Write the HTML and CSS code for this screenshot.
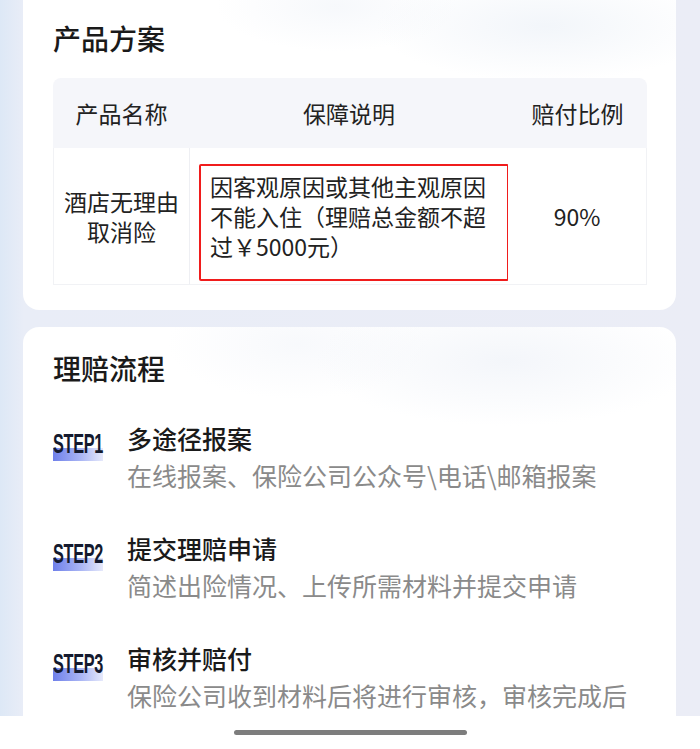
FILE: index.html
```html
<!DOCTYPE html>
<html lang="zh-CN">
<head>
<meta charset="utf-8">
<title>产品方案</title>
<link rel="stylesheet" href="styles.css">
</head>
<body>
<div class="page">
  <section class="card card-plan">
    <h2 class="card-title">产品方案</h2>
    <div class="table">
      <div class="cell head c1">产品名称</div>
      <div class="cell head c2">保障说明</div>
      <div class="cell head c3">赔付比例</div>
      <div class="cell body c1">酒店无理由取消险</div>
      <div class="cell body c2"><div class="highlight">因客观原因或其他主观原因不能入住（理赔总金额不超过￥5000元）</div></div>
      <div class="cell body c3">90%</div>
    </div>
  </section>

  <section class="card card-flow">
    <h2 class="card-title">理赔流程</h2>
    <div class="steps">
      <div class="step">
        <div class="badge"><span class="badge-text">STEP1</span></div>
        <div class="step-body">
          <div class="step-title">多途径报案</div>
          <div class="step-desc">在线报案、保险公司公众号\电话\邮箱报案</div>
        </div>
      </div>
      <div class="step">
        <div class="badge"><span class="badge-text">STEP2</span></div>
        <div class="step-body">
          <div class="step-title">提交理赔申请</div>
          <div class="step-desc">简述出险情况、上传所需材料并提交申请</div>
        </div>
      </div>
      <div class="step">
        <div class="badge"><span class="badge-text">STEP3</span></div>
        <div class="step-body">
          <div class="step-title">审核并赔付</div>
          <div class="step-desc">保险公司收到材料后将进行审核，审核完成后</div>
        </div>
      </div>
    </div>
  </section>
</div>
<div class="home-bar"><span class="indicator"></span></div>
</body>
</html>
```

FILE: styles.css
```css
html, body {
  margin: 0;
  padding: 0;
  height: 100%;
  overflow: hidden;
}

body {
  background: linear-gradient(90deg, #dde8f6 0px, #e9edf7 24px, #ebedf6 100%);
  font-family: "Noto Sans CJK SC", "Noto Sans", sans-serif;
  color: #1f1f1f;
}

.page {
  padding: 0 24px 0 23px;
}

.card {
  background-color: #ffffff;
  border-radius: 16px;
  padding: 0 30px;
}

.card-plan {
  margin-top: -20px;
  padding-top: 38px;
  padding-bottom: 25px;
  background-image:
    radial-gradient(ellipse 170px 55px at 80% 14%, rgba(232, 238, 246, 0.55), rgba(255, 255, 255, 0) 100%),
    radial-gradient(ellipse 120px 45px at 48% 8%, rgba(238, 242, 248, 0.5), rgba(255, 255, 255, 0) 100%);
}

.card-flow {
  margin-top: 17px;
  padding-top: 21px;
  padding-bottom: 40px;
  background-image:
    radial-gradient(ellipse 190px 65px at 74% 8%, rgba(236, 240, 247, 0.6), rgba(255, 255, 255, 0) 100%),
    radial-gradient(ellipse 130px 55px at 42% 4%, rgba(240, 243, 249, 0.5), rgba(255, 255, 255, 0) 100%);
}

.card-title {
  margin: 0;
  font-size: 28px;
  line-height: 40px;
  font-weight: 500;
  color: #1a1a1a;
}

/* table */
.table {
  margin-top: 20px;
  display: grid;
  grid-template-columns: 137px 318px 139px;
  grid-template-rows: 70px 137px;
}

.cell {
  display: flex;
  align-items: center;
  justify-content: center;
  text-align: center;
  font-size: 23px;
  line-height: 30px;
  color: #222222;
  box-sizing: border-box;
}

.cell.head {
  background-color: #f5f6fa;
}

.cell.head.c1 {
  border-top-left-radius: 8px;
}

.cell.head.c3 {
  border-top-right-radius: 8px;
}

.cell.body {
  background-color: #ffffff;
  border-bottom: 1px solid #f1f2f5;
}

.cell.body.c1 {
  padding: 0 10px;
  border-left: 1px solid #f1f2f5;
  border-right: 1px solid #eeeff3;
}

.cell.body.c3 {
  border-right: 1px solid #f1f2f5;
}

.cell.body.c2 {
  align-items: flex-start;
  justify-content: flex-start;
  padding: 16px 0 0 9px;
}

.highlight {
  flex-shrink: 0;
  width: 310px;
  height: 117px;
  box-sizing: border-box;
  border: 2px solid #f01c1c;
  border-radius: 2px;
  padding: 5px 8px 0 9px;
  text-align: left;
  font-size: 23px;
  line-height: 30px;
  color: #222222;
}

/* steps */
.steps {
  margin-top: 32px;
  display: flex;
  flex-direction: column;
  gap: 36px;
}

.step {
  display: flex;
  gap: 24px;
}

.badge {
  flex-shrink: 0;
  width: 50px;
  height: 30px;
  margin-top: 11px;
  background-image: linear-gradient(90deg, #6f80ea 0%, #a9b5f4 55%, #e6e9fb 100%);
  background-repeat: no-repeat;
  background-position: left bottom;
  background-size: 100% 13px;
  overflow: visible;
  white-space: nowrap;
}

.badge-text {
  display: inline-block;
  font-family: "Liberation Sans", "Noto Sans", sans-serif;
  font-weight: 700;
  font-size: 28px;
  line-height: 25px;
  letter-spacing: -0.5px;
  color: #141a2e;
  transform: scaleX(0.58);
  transform-origin: left center;
}

.step-body {
  display: flex;
  flex-direction: column;
}

.step-title {
  font-size: 25px;
  line-height: 37px;
  font-weight: 500;
  color: #1a1a1a;
}

.step-desc {
  font-size: 25px;
  line-height: 37px;
  color: #8a8a8a;
  white-space: nowrap;
}

/* system home indicator overlay */
.home-bar {
  position: fixed;
  left: 0;
  right: 0;
  bottom: 0;
  height: 33px;
  background-color: #ffffff;
  display: flex;
  justify-content: center;
}

.indicator {
  margin-top: 14px;
  width: 233px;
  height: 5px;
  border-radius: 3px;
  background-color: #7d7d7d;
}
```
